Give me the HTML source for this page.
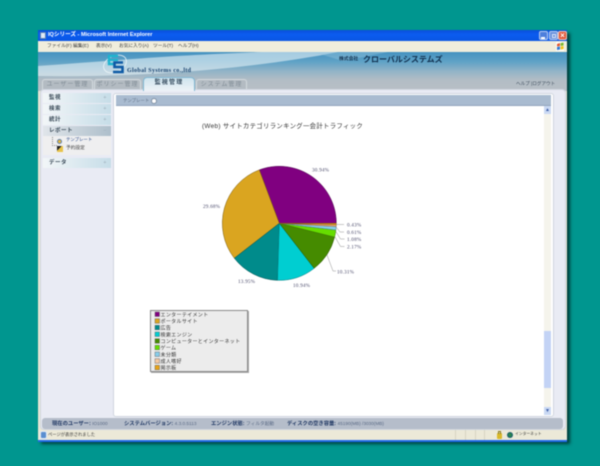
<!DOCTYPE html>
<html><head><meta charset="utf-8">
<style>
html,body{margin:0;padding:0;width:600px;height:466px;overflow:hidden;background:#00968f}
#r{position:absolute;left:0;top:0;width:600px;height:466px;overflow:hidden;filter:blur(.45px);font-family:"Liberation Sans","Noto Sans CJK JP",sans-serif}
#r div{position:absolute;box-sizing:border-box;white-space:nowrap}
.t{line-height:1}
.m{top:44px;font-size:4.7px;color:#3a3a3a;line-height:1}
.nav{left:43px;width:68px;height:10px;background:linear-gradient(90deg,#f2f6f8,#c6dde8);font-size:5.5px;font-weight:bold;color:#3a4a58;line-height:10px;padding-left:6px;letter-spacing:.5px}
.nav b{position:absolute;right:4px;top:0;color:#9fb0bc;font-weight:normal}
.tab{top:79px;height:11px;background:#b3bbc2;border:1px solid #d4dade;border-bottom:0;border-radius:3px 3px 0 0;font-size:6px;line-height:10px;color:#7f8b95;text-align:center;letter-spacing:1px}
.sb{font-size:5.3px;top:420px;line-height:7px;color:#1f3763;font-weight:bold}
.sb span{font-weight:normal;font-size:4.7px;color:#5a6a85}
</style></head><body><div id="r">
<!-- window -->
<div style="left:38px;top:30px;width:529px;height:411px;background:#e9e6d4;box-shadow:3px 3px 3px #003f3c"></div>
<!-- title bar -->
<div style="left:38px;top:30px;width:529px;height:11px;background:linear-gradient(180deg,#0a4fd8,#0b5cf0 40%,#0a56e4)"></div>
<div style="left:40px;top:32px;width:6px;height:7px;background:#dfeaf5;border:1px solid #5a7fb5"></div>
<div class="t" style="left:48px;top:33px;font-size:5.6px;color:#fff;font-weight:bold">IQシリーズ - Microsoft Internet Explorer</div>
<div style="left:539px;top:31px;width:9px;height:9px;background:#4e7fdc;border:1px solid #b9cdf2;border-radius:2px"><div style="left:1px;top:5px;width:4px;height:2px;background:#fff"></div></div>
<div style="left:549px;top:31px;width:9px;height:9px;background:#6b93de;border:1px solid #b9cdf2;border-radius:2px"><div style="left:2px;top:2px;width:4px;height:4px;border:1px solid #dce6f7"></div></div>
<div style="left:558px;top:31px;width:9px;height:9px;background:#e0583a;border:1px solid #f2c4b6;border-radius:2px;color:#fff;font-size:8px;line-height:7px;text-align:center;font-weight:bold">×</div>
<!-- menu -->
<div style="left:38px;top:41px;width:529px;height:11px;background:#f0eddc"></div>
<div class="m" style="left:47px">ファイル(F)</div>
<div class="m" style="left:73px">編集(E)</div>
<div class="m" style="left:96px">表示(V)</div>
<div class="m" style="left:119px">お気に入り(A)</div>
<div class="m" style="left:153px">ツール(T)</div>
<div class="m" style="left:178px">ヘルプ(H)</div>
<div style="left:556px;top:42px;width:8px;height:9px;background:#fffef8"></div>
<svg style="position:absolute;left:556px;top:42px" width="9" height="9"><path d="M1 2l3-1v3l-3 .5z" fill="#e2562c"/><path d="M4.6 1l3-.5v3l-3 .5z" fill="#7cb82f"/><path d="M1 5l3-.5v3L1 8z" fill="#2f79d4"/><path d="M4.6 4.500l3-.5v3l-3 .6z" fill="#f2c21a"/></svg>
<!-- header -->
<div style="left:38px;top:52px;width:529px;height:39px;background:linear-gradient(180deg,#4592c0 0,#5fa2c6 25%,#93b4c7 50%,#b3bdc5 72%,#b8bfc6 100%)"></div>
<svg style="position:absolute;left:38px;top:52px" width="529" height="30"><path d="M0 14C70 9 135 3 225 0H300C230 14 120 26 0 24z" fill="#e6f2f7" opacity=".6"/><path d="M275 0H350L305 9z" fill="#9cc8de" opacity=".4"/></svg>
<!-- logo -->
<svg style="position:absolute;left:102px;top:54px" width="27" height="22"><ellipse cx="13" cy="10" rx="12" ry="8" fill="none" stroke="#eef6f9" stroke-width=".8" transform="rotate(-25 13 10)"/><path d="M16 2H7v8h5" fill="none" stroke="#1db4cf" stroke-width="2.400"/><path d="M7 6h9" stroke="#1db4cf" stroke-width="2"/><path d="M21 8.500H12.500V13H20.500V18H11" fill="none" stroke="#0e5aa5" stroke-width="2.600"/></svg>
<div class="t" style="left:127px;top:68px;font-size:6px;font-weight:bold;color:#16416e;font-family:'Liberation Serif','Noto Sans CJK JP',serif;letter-spacing:.35px">Global Systems co.,ltd</div>
<div class="t" style="left:339px;top:58px;font-size:4.8px;color:#11304f;font-weight:bold">株式会社</div>
<div class="t" style="left:363px;top:56px;font-size:8px;color:#11304f;font-weight:bold">クローバルシステムズ</div>
<div class="t" style="left:516px;top:82px;font-size:4.6px;color:#3a4a5a">ヘルプ |ログアウト</div>
<!-- tabs -->
<div class="tab" style="left:42px;width:51px">ユーザー管理</div>
<div class="tab" style="left:94px;width:47px">ポリシー管理</div>
<div class="tab" style="left:196px;width:51px">システム管理</div>
<!-- main panel -->
<div style="left:40px;top:89px;width:526px;height:341px;background:#e9ebf4;border:1px solid #cfd6df;border-radius:4px"></div>
<div style="left:143px;top:77px;width:52px;height:14px;border:1px solid #7fb7d2;border-bottom:0;border-radius:4px 4px 0 0;font-size:6px;line-height:11px;font-weight:bold;color:#34495c;text-align:center;letter-spacing:1.2px;background:linear-gradient(180deg,#cfe4ee,#eef3f7)">監視管理</div>
<!-- nav -->
<div class="nav" style="top:93px">監視<b>+</b></div>
<div class="nav" style="top:104px">検索<b>+</b></div>
<div class="nav" style="top:115px">統計<b>+</b></div>
<div style="left:43px;top:135px;width:68px;height:20px;background:#efeff0"></div>
<div class="nav" style="top:126px;background:linear-gradient(90deg,#e0e5ea,#aebfcb)">レポート<b>−</b></div>
<div style="left:52px;top:137px;width:5px;height:9px;border-left:1px dotted #888;border-bottom:1px dotted #888"></div>
<div style="left:57px;top:139px;width:5px;height:5px;border-radius:50%;background:#e8b93a;border:1px solid #5d7ea8"></div>
<div style="left:57px;top:146px;width:6px;height:6px;background:linear-gradient(135deg,#222 40%,#e8c34a 40%)"></div>
<div class="t" style="left:66px;top:138px;font-size:4.4px;color:#2a4a8a">テンプレート</div>
<div class="t" style="left:66px;top:146px;font-size:4.7px;color:#444">予約設定</div>
<div class="nav" style="top:158px">データ<b>+</b></div>
<!-- content frame -->
<div style="left:113px;top:93px;width:441px;height:324px;background:#fff;border:1px solid #d0d6de;border-radius:3px"></div>
<div style="left:116px;top:95px;width:435px;height:11px;background:#a9bbd0;border-bottom:1px solid #93a6bd"></div>
<div class="t" style="left:123px;top:99px;font-size:4.4px;color:#64748a">テンプレート</div>
<div style="left:151px;top:98px;width:6px;height:6px;border-radius:50%;background:#fff;border:1px solid #7f90a5"></div>
<!-- scrollbar -->
<div style="left:544px;top:106px;width:7px;height:309px;background:#f5f4ec"></div>
<div style="left:544px;top:106px;width:7px;height:8px;background:#cad9f3;color:#3d5ea8;font-size:5px;line-height:8px;text-align:center">▲</div>
<div style="left:544px;top:331px;width:7px;height:57px;background:#c3d3f5"></div>
<div style="left:544px;top:407px;width:7px;height:8px;background:#cad9f3;color:#3d5ea8;font-size:5px;line-height:8px;text-align:center">▼</div>
<!-- title -->
<div class="t" style="left:202px;top:124px;font-size:6.4px;color:#333;letter-spacing:.3px">(Web) サイトカテゴリランキング一会計トラフィック</div>
<!-- pie -->
<svg style="position:absolute;left:190px;top:155px" width="190" height="140" viewBox="190 155 190 140" font-family="Liberation Serif,serif" font-size="5.2" fill="#4a4a6a" letter-spacing=".2">
<g stroke-width=".5">
<path d="M279.3 223.3L336.3 223.3A57 57 0 0 0 259.3 169.9Z" fill="#800080" stroke="#4a004a"/>
<path d="M279.3 223.3L259.3 169.9A57 57 0 0 0 234.3 258.2Z" fill="#daa520" stroke="#7a5c10"/>
<path d="M279.3 223.3L234.3 258.2A57 57 0 0 0 277.5 280.3Z" fill="#008b8b" stroke="#005050"/>
<path d="M279.3 223.3L277.5 280.3A57 57 0 0 0 314.2 268.3Z" fill="#00ced1" stroke="#007a7c"/>
<path d="M279.3 223.3L314.2 268.3A57 57 0 0 0 334.6 237.1Z" fill="#458b00" stroke="#264d00"/>
<path d="M279.3 223.3L334.6 237.1A57 57 0 0 0 335.9 230Z" fill="#66dd00" stroke="#3a7a00"/>
<path d="M279.3 223.3L335.9 230A57 57 0 0 0 336.2 226.5Z" fill="#87ceeb" stroke="#4a7f90"/>
<path d="M279.3 223.3L336.2 226.5A57 57 0 0 0 336.3 224.7Z" fill="#f4b183" stroke="#8a6040"/>
<path d="M279.3 223.3L336.3 224.7A57 57 0 0 0 336.3 223.3Z" fill="#e8a317" stroke="#8a6010"/>
</g>
<path d="M336 224.500h8M336 227l4 5h4M335.500 231l5 8h4M334.500 236l6 10.500h4M327 255l6 16h3" fill="none" stroke="#777" stroke-width=".4"/>
<text x="312" y="171.500">30.94%</text>
<text x="203" y="208">29.68%</text>
<text x="238" y="283">13.95%</text>
<text x="293" y="287">10.94%</text>
<text x="337" y="273.500">10.31%</text>
<text x="347" y="226.500">0.43%</text>
<text x="347" y="234">0.61%</text>
<text x="347" y="241">1.08%</text>
<text x="347" y="248.500">2.17%</text>
</svg>
<!-- legend -->
<div style="left:151px;top:311px;width:98px;height:62px;background:#aaa"></div>
<div style="left:150px;top:310px;width:98px;height:62px;background:#ececec;border:1px solid #888"></div>
<svg style="position:absolute;left:150px;top:310px" width="98" height="62" font-family="Liberation Sans,Noto Sans CJK JP,sans-serif" font-size="5" fill="#333" letter-spacing=".33">
<g stroke="#555" stroke-width=".4">
<rect x="5" y="2" width="4.500" height="4.500" fill="#800080"/>
<rect x="5" y="8.700" width="4.500" height="4.500" fill="#daa520"/>
<rect x="5" y="15.300" width="4.500" height="4.500" fill="#008b8b"/>
<rect x="5" y="22" width="4.500" height="4.500" fill="#00ced1"/>
<rect x="5" y="28.700" width="4.500" height="4.500" fill="#458b00"/>
<rect x="5" y="35.300" width="4.500" height="4.500" fill="#66dd00"/>
<rect x="5" y="42" width="4.500" height="4.500" fill="#87ceeb"/>
<rect x="5" y="48.700" width="4.500" height="4.500" fill="#f4c9a3"/>
<rect x="5" y="55.300" width="4.500" height="4.500" fill="#e8a317"/>
</g>
<text x="10.500" y="6.300">エンターテイメント</text>
<text x="10.500" y="13">ポータルサイト</text>
<text x="10.500" y="19.600">広告</text>
<text x="10.500" y="26.300">検索エンジン</text>
<text x="10.500" y="33">コンピューターとインターネット</text>
<text x="10.500" y="39.600">ゲーム</text>
<text x="10.500" y="46.300">未分類</text>
<text x="10.500" y="53">成人嗜好</text>
<text x="10.500" y="59.600">掲示板</text>
</svg>
<!-- app status -->
<div style="left:42px;top:418px;width:521px;height:11px;background:#b5bdca;border-radius:3px"></div>
<div class="sb" style="left:52px">現在のユーザー: <span>IO1000</span></div>
<div class="sb" style="left:124px">システムバージョン: <span>4.3.0.5113</span></div>
<div class="sb" style="left:211px">エンジン状態: <span>フィルタ起動</span></div>
<div class="sb" style="left:287px">ディスクの空き容量: <span>45190(MB) /3030(MB)</span></div>
<!-- IE status -->
<div style="left:38px;top:430px;width:529px;height:10px;background:#ece9d8"></div>
<div style="left:38px;top:440px;width:529px;height:1.500px;background:#1f6be8"></div>
<div style="left:40px;top:431px;width:7px;height:8px;background:#5b8fd0;border:1px solid #dde8f6;border-radius:2px"></div>
<div class="t" style="left:48px;top:433px;font-size:4.3px;color:#333">ページが表示されました</div>
<div style="left:455px;top:430px;width:1px;height:10px;background:#d8d5c2"></div>
<div style="left:465px;top:430px;width:1px;height:10px;background:#d8d5c2"></div>
<div style="left:475px;top:430px;width:1px;height:10px;background:#d8d5c2"></div>
<div style="left:484px;top:430px;width:1px;height:10px;background:#d8d5c2"></div>
<div style="left:497px;top:433px;width:5px;height:6px;background:#d9b92a;border-radius:1px"></div>
<div style="left:498px;top:431px;width:3px;height:3px;border:1px solid #8a7a20;border-bottom:0"></div>
<div style="left:507px;top:432px;width:6px;height:6px;border-radius:50%;background:radial-gradient(circle,#2f9a3a,#123f8c)"></div>
<div class="t" style="left:515px;top:433px;font-size:3.8px;color:#333">インターネット</div>
</div></body></html>
